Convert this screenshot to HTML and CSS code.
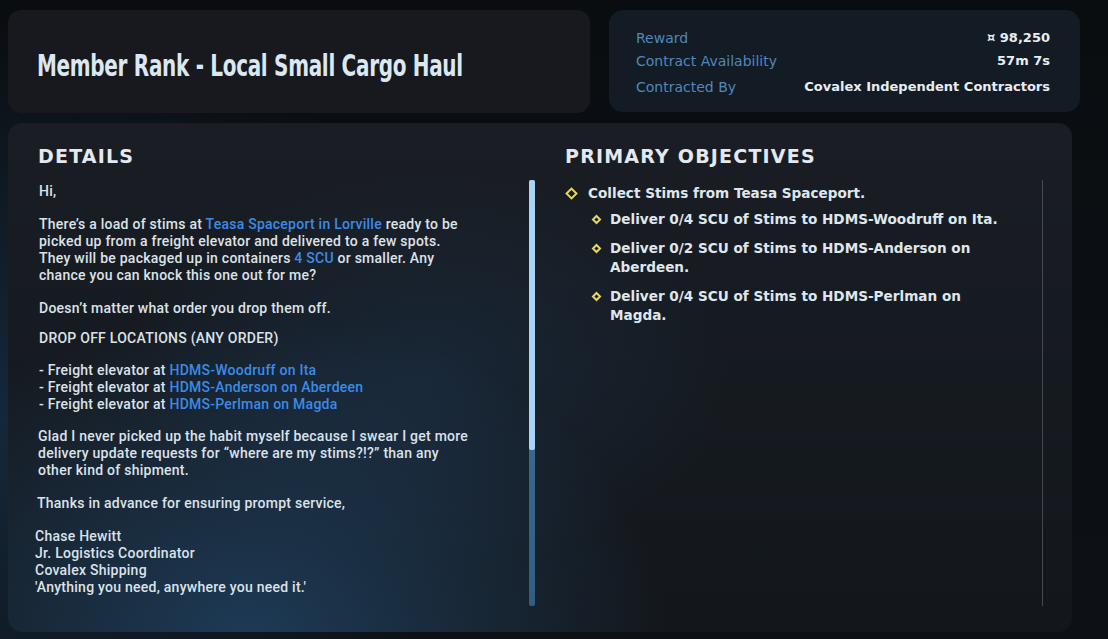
FILE: index.html
```html
<!DOCTYPE html>
<html>
<head>
<meta charset="utf-8">
<link rel="stylesheet" href="styles.css">
</head>
<body>
<div class="top">
  <div class="title-panel">
    <h1 class="title">Member Rank - Local Small Cargo Haul</h1>
  </div>
  <div class="info-panel">
    <div class="info-row"><span class="label">Reward</span><span class="value">¤ 98,250</span></div>
    <div class="info-row"><span class="label">Contract Availability</span><span class="value">57m 7s</span></div>
    <div class="info-row row3"><span class="label">Contracted By</span><span class="value">Covalex Independent Contractors</span></div>
  </div>
</div>
<div class="main">
  <h2 class="heading h-details">DETAILS</h2>
  <h2 class="heading h-obj">PRIMARY OBJECTIVES</h2>
  <div class="details">
    <p class="p-hi">Hi,</p>
    <p class="p-intro">There’s a load of stims at <span class="link">Teasa Spaceport in Lorville</span> ready to be<br>picked up from a freight elevator and delivered to a few spots.<br>They will be packaged up in containers <span class="link">4 SCU</span> or smaller. Any<br>chance you can knock this one out for me?</p>
    <p class="p-order">Doesn’t matter what order you drop them off.</p>
    <p class="p-drop">DROP OFF LOCATIONS (ANY ORDER)</p>
    <p class="p-list">- Freight elevator at <span class="link">HDMS-Woodruff on Ita</span><br>- Freight elevator at <span class="link">HDMS-Anderson on Aberdeen</span><br>- Freight elevator at <span class="link">HDMS-Perlman on Magda</span></p>
    <p class="p-glad">Glad I never picked up the habit myself because I swear I get more<br>delivery update requests for “where are my stims?!?” than any<br>other kind of shipment.</p>
    <p class="p-thanks">Thanks in advance for ensuring prompt service,</p>
    <p class="sig">Chase Hewitt<br>Jr. Logistics Coordinator<br>Covalex Shipping<br>'Anything you need, anywhere you need it.'</p>
  </div>
  <div class="scrollbar"><div class="thumb"></div></div>
  <ul class="objectives">
    <li class="obj main-obj"><span class="diamond big"></span><span>Collect Stims from Teasa Spaceport.</span></li>
    <li class="obj sub"><span class="diamond"></span><span>Deliver 0/4 SCU of Stims to HDMS-Woodruff on Ita.</span></li>
    <li class="obj sub"><span class="diamond"></span><span>Deliver 0/2 SCU of Stims to HDMS-Anderson on<br>Aberdeen.</span></li>
    <li class="obj sub"><span class="diamond"></span><span>Deliver 0/4 SCU of Stims to HDMS-Perlman on<br>Magda.</span></li>
  </ul>
  <div class="edge-line"></div>
</div>
</body>
</html>
```

FILE: styles.css
```css
* { box-sizing: border-box; }
html, body { margin: 0; padding: 0; }
body {
  width: 1108px;
  height: 639px;
  overflow: hidden;
  background: radial-gradient(ellipse 500px 400px at 0px 420px, #14283b 0%, rgba(20,40,59,0) 100%), linear-gradient(180deg, #0a0d10 0%, #0d1116 100%);
  font-family: "DejaVu Sans", sans-serif;
  color: #dde4eb;
}
.top {
  display: flex;
  padding: 10px 0 0 8px;
  height: 123px;
}
.title-panel {
  width: 582px;
  height: 103px;
  background: #17191e;
  border-radius: 13px;
  display: flex;
  align-items: center;
  padding-left: 29px;
}
.title {
  margin: 0;
  font-family: "DejaVu Sans Condensed", "DejaVu Sans", sans-serif;
  font-stretch: condensed;
  font-weight: bold;
  font-size: 30px;
  color: #dbe8f1;
  letter-spacing: -0.4px;
  padding-top: 8px;
  white-space: nowrap;
  transform: scaleX(0.74);
  transform-origin: left center;
}
.info-panel {
  margin-left: 19px;
  width: 471px;
  height: 102px;
  background: #131b24;
  border-radius: 14px;
  padding: 16px 30px 0 27px;
}
.info-row {
  display: flex;
  justify-content: space-between;
  height: 23px;
  align-items: center;
  font-size: 14px;
}
.info-row.row3 { margin-top: 3px; }
.label {
  color: #4f88bd;
  font-family: "DejaVu Sans", sans-serif;
  font-size: 14px;
}
.value {
  color: #e8edf2;
  font-weight: bold;
  font-size: 13px;
}
.main {
  margin-left: 8px;
  width: 1064px;
  height: 509px;
  border-radius: 14px;
  background:
    radial-gradient(ellipse 420px 330px at 240px 520px, rgba(38,88,135,0.55) 0%, rgba(38,88,135,0) 100%),
    radial-gradient(ellipse 300px 200px at 420px 250px, rgba(30,60,95,0.35) 0%, rgba(30,60,95,0) 100%),
    linear-gradient(180deg, #1a1e24 0%, #161b21 40%, #13171c 100%);
  display: grid;
  grid-template-columns: 492px 5px 30px 474px 2px;
  grid-template-rows: 22px 426px;
  row-gap: 13px;
  padding: 22px 0 0 30px;
}
.heading {
  margin: 0;
  font-size: 19px;
  line-height: 22px;
  font-weight: bold;
  letter-spacing: 1.2px;
  color: #e3e9ef;
}
.h-details { grid-column: 1; grid-row: 1; }
.h-obj { grid-column: 4; grid-row: 1; }
.details {
  grid-column: 1;
  grid-row: 2;
  padding: 0 0 0 1px;
  margin-top: 3px;
  font-family: Roboto, sans-serif;
  font-weight: 500;
  font-size: 14px;
  letter-spacing: 0.25px;
  line-height: 17px;
  color: #dce2e9;
  white-space: nowrap;
}
.details p { margin: 0; }
.details .p-hi { margin-bottom: 16px; }
.details .p-intro { margin-bottom: 16px; }
.details .p-order { margin-bottom: 13px; }
.details .p-drop { margin-bottom: 15px; }
.details .p-list { margin-bottom: 15px; }
.details .p-glad { margin-bottom: 16px; margin-left: -1px; }
.details .p-thanks { margin-bottom: 16px; margin-left: -2px; }
.details .sig { margin-left: -4px; }
.link { color: #3b8be6; }
.scrollbar {
  grid-column: 2;
  grid-row: 2;
  height: 426px;
  background: linear-gradient(180deg, #4a7aa3 0%, #335d82 100%);
  border-radius: 2px;
  margin-left: -1px;
}
.thumb {
  height: 270px;
  background: #a9d4f5;
  border-radius: 2px;
}
.objectives {
  grid-column: 4;
  grid-row: 2;
  list-style: none;
  margin: 4px 0 0 0;
  padding: 0;
}
.obj {
  display: flex;
  align-items: flex-start;
  font-weight: bold;
  font-size: 13.6px;
  line-height: 19px;
  color: #dfe6ec;
  white-space: nowrap;
}
.main-obj { margin-bottom: 7px; }
.sub { padding-left: 27px; margin-bottom: 10px; }
.diamond {
  flex: none;
  width: 7px;
  height: 7px;
  border: 2px solid #e6d66a;
  transform: rotate(45deg);
  margin: 6px 10px 0 1px;
}
.diamond.big {
  width: 9px;
  height: 9px;
  margin: 5px 12px 0 2px;
}
.edge-line {
  grid-column: 5;
  grid-row: 2;
  width: 1px;
  background: #45494f;
  margin-left: 3px;
}
```
